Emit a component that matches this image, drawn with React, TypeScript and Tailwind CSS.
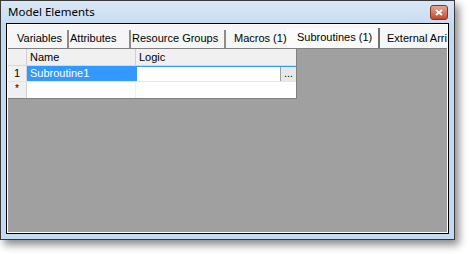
import React from "react";

const tabs = [
    {label: "Variables", box: "w-[52px] border-r-2 pl-0"},
    {label: "Attributes", box: "w-[62px] border-r-2 pl-[1px]"},
    {label: "Resource Groups", box: "w-[95px] border-r-2 pl-[1px]"},
    {label: "Macros (1)", box: "w-[61px] pl-[8px]"},
];

function CloseButton() {
    return (
        <div className="w-[18px] h-[15px] rounded-[3px] border border-[#7a3a2a] bg-gradient-to-b from-[#eaa690] to-[#c4442a] flex items-center justify-center">
            <svg width="8" height="7" viewBox="0 0 8 7">
                <path d="M1 1 L7 6 M7 1 L1 6" stroke="white" strokeWidth="2"/>
            </svg>
        </div>
    );
}

function Grid() {
    return (
        <div className="w-[289px] bg-white border-r border-b border-[#808080] text-[11px] text-black">
            <div className="flex h-[17px] bg-[#f0f0f0] border-b border-[#d8d8d8]">
                <div className="w-[19px] border-r border-[#d0d0d0]"/>
                <div className="w-[109px] border-r border-[#d0d0d0] pl-[3px] leading-[16px]">Name</div>
                <div className="flex-1 pl-[3px] leading-[16px]">Logic</div>
            </div>
            <div className="flex h-[16px] border-b border-[#e4e4e4]">
                <div className="w-[19px] bg-[#f0f0f0] border-r border-[#d0d0d0] text-center leading-[15px]">1</div>
                <div className="w-[109px] bg-[#3399ff] text-white pl-[3px] leading-[15px]">Subroutine1</div>
                <div className="flex-1 flex border border-[#3399ff] border-r-0 border-b-0 bg-white">
                    <div className="flex-1"/>
                    <div className="w-[16px] bg-[#e8e8e8] border-l border-[#a0a0a0] text-center leading-[12px] text-[11px]">...</div>
                </div>
            </div>
            <div className="flex h-[16px]">
                <div className="w-[19px] bg-[#f0f0f0] border-r border-[#d0d0d0] text-center text-[10px] leading-[14px]">*</div>
                <div className="w-[109px] border-r border-[#f0f0f0]"/>
                <div className="flex-1"/>
            </div>
        </div>
    );
}

export default function App() {
    return (
        <div className="w-[469px] h-[254px] bg-white" style={{fontFamily: "'Liberation Sans', Arial, sans-serif"}}>
            <div className="w-[455px] h-[240px] border border-[#3a3a3a] bg-[#c4daf1] shadow-[4px_5px_8px_rgba(0,0,0,0.45)] flex flex-col">
                <div className="h-[22px] flex items-start justify-between pl-[7px] pr-[6px] pt-[4px] bg-gradient-to-b from-[#dbe8f6] to-[#c8dcf2]">
                    <span className="text-[11.5px] text-black leading-[14px]" style={{fontFamily: "'Noto Sans', sans-serif"}}>Model Elements</span>
                    <CloseButton/>
                </div>
                <div className="flex-1 px-[5px] pb-[5px] flex">
                    <div className="w-[443px] border border-black bg-white p-px flex">
                        <div className="w-[439px] bg-[#f0f0f0] flex flex-col">
                            <div className="w-[439px] h-[23px] flex items-end pl-[9px] text-[11px] text-black bg-[#f6f6f6] overflow-hidden">
                                {tabs.map(t => (
                                    <div key={t.label}
                                         className={`${t.box} h-[18px] shrink-0 border-[#8c8c8c] leading-[17px] whitespace-nowrap`}>
                                        {t.label}
                                    </div>
                                ))}
                                <div className="w-[93px] h-[20px] shrink-0 bg-[#fbfbfb] border-l border-white border-r-2 border-r-[#707070] pl-[9px] pt-[1px] leading-[17px] whitespace-nowrap">
                                    Subroutines (1)
                                </div>
                                <div className="w-[67px] shrink-0 overflow-hidden h-[18px] pl-[7px] leading-[17px] whitespace-nowrap">External Arrivals</div>
                            </div>
                            <div className="flex-1 bg-[#a0a0a0] border-t border-[#808080]">
                                <Grid/>
                            </div>
                        </div>
                    </div>
                </div>
            </div>
        </div>
    );
}
